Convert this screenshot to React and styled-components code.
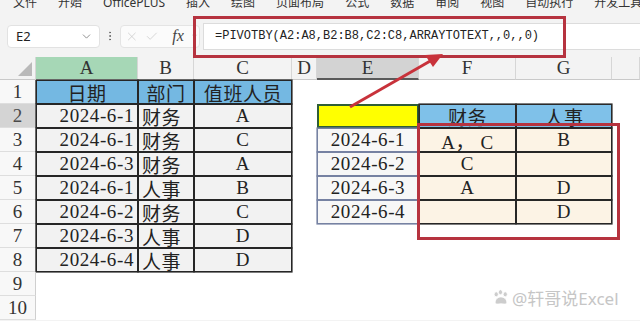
import styled, { createGlobalStyle } from "styled-components";
import { ChevronDown, EllipsisVertical, X, Check } from "lucide-react";

const GlobalStyle = createGlobalStyle`
  body {
    margin: 0;
    background: #fff;
    font-family: "Noto Sans", "Noto Sans CJK SC", sans-serif;
  }
`;

const CJK = `"Liberation Serif", "Noto Sans CJK SC", serif`;

const Window = styled.div`
  position: relative;
  width: 640px;
  height: 321px;
  overflow: hidden;
  background: #f3f3f3;
`;

const MenuBar = styled.div`
  height: 15px;
  display: flex;
  align-items: flex-start;
  gap: 21px;
  padding-left: 13px;
  overflow: hidden;
  span {
    font-size: 12px;
    line-height: 12px;
    margin-top: -3px;
    color: #333;
    white-space: nowrap;
    font-family: "Noto Sans", "Noto Sans CJK SC", sans-serif;
  }
`;

const FormulaBar = styled.div`
  height: 42px;
  display: flex;
  align-items: center;
  padding-left: 7px;
`;

const NameBox = styled.div`
  width: 93px;
  height: 23px;
  box-sizing: border-box;
  background: #fff;
  border: 1px solid #e2e2e2;
  border-radius: 4px;
  display: flex;
  align-items: center;
  justify-content: space-between;
  padding: 0 6px 0 8px;
  font-size: 13px;
  color: #222;
  svg {
    color: #777;
  }
`;

const Dots = styled.div`
  width: 20px;
  display: flex;
  justify-content: center;
  color: #666;
`;

const ActionBox = styled.div`
  width: 80px;
  height: 23px;
  box-sizing: border-box;
  background: #fbfbfb;
  border: 1px solid #e4e4e4;
  border-radius: 4px;
  display: flex;
  align-items: center;
  gap: 6px;
  padding-left: 4px;
  color: #c4c4c4;
`;

const Fx = styled.span`
  font-family: "Liberation Serif", serif;
  font-style: italic;
  font-size: 16px;
  color: #444;
  margin-left: 8px;
`;

const FormulaInput = styled.div`
  flex: 1;
  height: 27px;
  margin-left: 3px;
  box-sizing: border-box;
  background: #fff;
  border: 1px solid #dcdcdc;
  border-right: none;
  display: flex;
  align-items: center;
  padding-left: 11px;
  font-family: "Liberation Mono", monospace;
  font-size: 12px;
  color: #222;
`;

const Sheet = styled.div`
  display: grid;
  grid-template-columns: 36px 102px 56px 98px 25px 102px 97px 96px 1fr;
  grid-template-rows: 23px repeat(10, 24px);
  background: #fff;
  font-family: ${CJK};
  font-size: 19px;
  color: #222;
`;

const Corner = styled.div`
  position: relative;
  background: #f3f3f3;
  border-bottom: 1px solid #c9c9c9;
  border-right: 1px solid #d6d6d6;
  &::after {
    content: "";
    position: absolute;
    right: 3px;
    bottom: 3px;
    border-style: solid;
    border-width: 0 0 14px 14px;
    border-color: transparent transparent #b9b9b9 transparent;
  }
`;

const ColHead = styled.div`
  display: flex;
  align-items: center;
  justify-content: center;
  box-sizing: border-box;
  background: ${(p) => (p.$mark === "green" ? "#a6d7b6" : p.$mark === "gray" ? "#d3d3d3" : "#f3f3f3")};
  border-right: 1px solid #d6d6d6;
  border-bottom: ${(p) => (p.$mark === "gray" ? "2px solid #5a5a5a" : "1px solid #c9c9c9")};
  color: #333;
  font-size: 19px;
`;

const RowHead = styled.div`
  display: flex;
  align-items: center;
  justify-content: center;
  box-sizing: border-box;
  background: ${(p) => (p.$active ? "#d4d4d4" : "#f8f8f8")};
  border-right: 1px solid #cfcfcf;
  border-bottom: 1px solid #dedede;
  color: ${(p) => (p.$active ? "#4a4a4a" : "#333")};
`;

const kinds = {
  plain: { bg: "transparent", line: null },
  head: { bg: "#74b8e2", line: "#262626" },
  data: { bg: "#f2f2f2", line: "#262626" },
  pivotHead: { bg: "#7fc1e9", line: "#2a2a2a" },
  pivotDate: { bg: "#f7f7f7", line: "#7682a2" },
  pivotVal: { bg: "#fcf3e5", line: "#262626" },
};

const Cell = styled.div`
  display: flex;
  align-items: center;
  justify-content: ${(p) => p.$align};
  padding: 0 4px;
  white-space: pre;
  overflow: hidden;
  letter-spacing: 0.6px;
  background: ${(p) => kinds[p.$kind].bg};
  box-shadow: ${(p) =>
    kinds[p.$kind].line
      ? `inset 0 0 0 1px ${kinds[p.$kind].line}, 0 0 0 0.6px ${kinds[p.$kind].line}`
      : "none"};
`;

const Selected = styled.div`
  background: #ffff00;
  box-shadow: inset 0 0 0 2px #2f5e36;
`;

const RedFrame = styled.div`
  position: absolute;
  box-sizing: border-box;
  border: 3px solid #b6333f;
  left: ${(p) => p.$x}px;
  top: ${(p) => p.$y}px;
  width: ${(p) => p.$w}px;
  height: ${(p) => p.$h}px;
  pointer-events: none;
`;

const Arrow = styled.svg`
  position: absolute;
  left: 0;
  top: 0;
  pointer-events: none;
`;

const Watermark = styled.div`
  position: absolute;
  left: 492px;
  top: 285px;
  display: flex;
  align-items: center;
  gap: 2px;
  font-family: "Noto Sans", "Noto Sans CJK SC", sans-serif;
  font-size: 17px;
  color: #c6c6c6;
  text-shadow: 0 0 1px #fff, 1px 1px 0 #fff, -1px -1px 0 #fff, 1px -1px 0 #fff, -1px 1px 0 #fff;
`;

const menu = ["文件", "开始", "OfficePLUS", "插入", "绘图", "页面布局", "公式", "数据", "审阅", "视图", "自动执行", "开发工具", "帮助"];
const cols = ["A", "B", "C", "D", "E", "F", "G", ""];

const L = (t, align) => ({ t, k: "data", a: align });
const leftRows = [
  ["2024-6-1", "财务", "A"],
  ["2024-6-1", "财务", "C"],
  ["2024-6-3", "财务", "A"],
  ["2024-6-1", "人事", "B"],
  ["2024-6-2", "财务", "C"],
  ["2024-6-3", "人事", "D"],
  ["2024-6-4", "人事", "D"],
];
const pivot = {
  2: ["2024-6-1", "A， C", "B"],
  3: ["2024-6-2", "C", ""],
  4: ["2024-6-3", "A", "D"],
  5: ["2024-6-4", "", "D"],
};

function buildRow(i) {
  const cells = Array(8).fill(null).map(() => ({ t: "", k: "plain", a: "center" }));
  if (i === 0) {
    cells[0] = { t: "日期", k: "head", a: "center" };
    cells[1] = { t: "部门", k: "head", a: "center" };
    cells[2] = { t: "值班人员", k: "head", a: "center" };
  } else if (i <= 7) {
    const [d, dep, who] = leftRows[i - 1];
    cells[0] = L(d, "flex-end");
    cells[1] = L(dep, "flex-start");
    cells[2] = L(who, "center");
  }
  if (i === 1) {
    cells[4] = { sel: true };
    cells[5] = { t: "财务", k: "pivotHead", a: "center" };
    cells[6] = { t: "人事", k: "pivotHead", a: "center" };
  }
  if (pivot[i]) {
    const [d, f, g] = pivot[i];
    cells[4] = { t: d, k: "pivotDate", a: "center" };
    cells[5] = { t: f, k: "pivotVal", a: "center" };
    cells[6] = { t: g, k: "pivotVal", a: "center" };
  }
  return cells;
}

const Paw = () => (
  <svg width="18" height="17" viewBox="0 0 17 16">
    <g fill="#cdcdcd" stroke="#fff" strokeWidth="0.8">
      <ellipse cx="4" cy="5" rx="2" ry="2.4" />
      <ellipse cx="8" cy="3" rx="2" ry="2.4" />
      <ellipse cx="12.5" cy="5" rx="2" ry="2.4" />
      <path d="M3 13 C3 9 6 7.5 8.3 7.5 C11 7.5 14 9 14 13 C14 15 11 14 8.5 14 C6 14 3 15 3 13 Z" />
    </g>
  </svg>
);

export default function App() {
  return (
    <Window>
      <GlobalStyle />
      <MenuBar>
        {menu.map((m) => (
          <span key={m}>{m}</span>
        ))}
      </MenuBar>
      <FormulaBar>
        <NameBox>
          E2
          <ChevronDown size={13} strokeWidth={1.5} />
        </NameBox>
        <Dots>
          <EllipsisVertical size={12} strokeWidth={2} />
        </Dots>
        <ActionBox>
          <X size={15} strokeWidth={1.2} />
          <Check size={15} strokeWidth={1.2} />
          <Fx>fx</Fx>
          <ChevronDown size={10} strokeWidth={1.5} />
        </ActionBox>
        <FormulaInput>=PIVOTBY(A2:A8,B2:B8,C2:C8,ARRAYTOTEXT,,0,,0)</FormulaInput>
      </FormulaBar>
      <Sheet>
        <Corner />
        {cols.map((c, j) => (
          <ColHead key={j} $mark={c === "A" ? "green" : c === "E" ? "gray" : null}>
            {c}
          </ColHead>
        ))}
        {Array.from({ length: 10 }, (_, i) => (
          <Row key={i} index={i} />
        ))}
      </Sheet>
      <RedFrame $x={193} $y={16} $w={373} $h={42} />
      <RedFrame $x={417} $y={123} $w={203} $h={117} />
      <Arrow width="640" height="321">
        <line x1="350" y1="107" x2="432" y2="60" stroke="#c8323b" strokeWidth="3" />
        <polygon points="443,54 425,55 433,67" fill="#c8323b" />
      </Arrow>
      <Watermark>
        <Paw />
        @轩哥说Excel
      </Watermark>
    </Window>
  );
}

function Row({ index }) {
  const cells = buildRow(index);
  return (
    <>
      <RowHead $active={index === 1}>{index + 1}</RowHead>
      {cells.map((c, j) =>
        c.sel ? (
          <Selected key={j} />
        ) : (
          <Cell key={j} $kind={c.k} $align={c.a}>
            {c.t}
          </Cell>
        )
      )}
    </>
  );
}
